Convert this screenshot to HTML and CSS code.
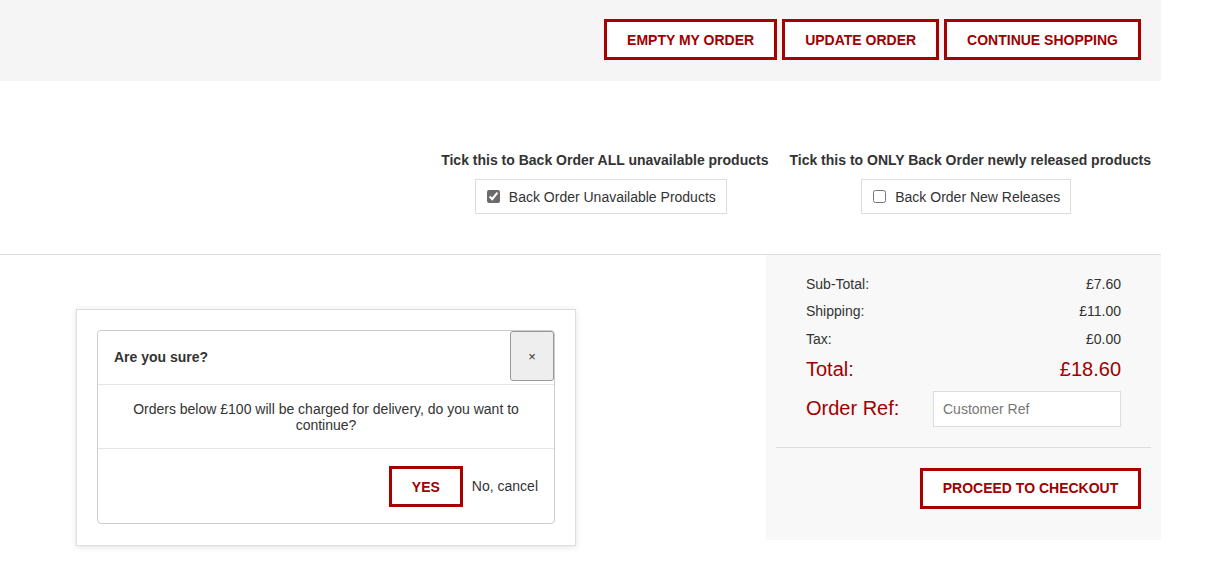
FILE: index.html
```html
<!DOCTYPE html>
<html lang="en">
<head>
<meta charset="utf-8">
<title>Basket</title>
<link rel="stylesheet" href="styles.css">
</head>
<body>
<div class="page">
  <div class="topbar">
    <button class="btn-red">Empty my order</button>
    <button class="btn-red">Update order</button>
    <button class="btn-red">Continue shopping</button>
  </div>

  <div class="backorder">
    <div class="bo-col">
      <div class="bo-label">Tick this to Back Order ALL unavailable products</div>
      <label class="bo-box"><input type="checkbox" checked> Back Order Unavailable Products</label>
    </div>
    <div class="bo-col">
      <div class="bo-label">Tick this to ONLY Back Order newly released products</div>
      <label class="bo-box"><input type="checkbox"> Back Order New Releases</label>
    </div>
  </div>

  <div class="lower">
    <div class="left">
      <div class="dialog-wrap">
        <div class="dialog">
          <div class="dialog-head">
            <span class="dialog-title">Are you sure?</span>
            <button class="close">&times;</button>
          </div>
          <div class="dialog-body">Orders below £100 will be charged for delivery, do you want to continue?</div>
          <div class="dialog-foot">
            <button class="btn-red btn-yes">Yes</button>
            <span class="cancel">No, cancel</span>
          </div>
        </div>
      </div>
    </div>
    <div class="summary">
      <div class="totals">
        <div class="row"><span>Sub-Total:</span><span>£7.60</span></div>
        <div class="row"><span>Shipping:</span><span>£11.00</span></div>
        <div class="row"><span>Tax:</span><span>£0.00</span></div>
        <div class="row total"><span>Total:</span><span>£18.60</span></div>
        <div class="row ref"><span>Order Ref:</span><input type="text" placeholder="Customer Ref"></div>
      </div>
      <div class="sum-rule"></div>
      <div class="checkout"><button class="btn-red btn-checkout">Proceed to checkout</button></div>
    </div>
  </div>
</div>
</body>
</html>
```

FILE: styles.css
```css
* { box-sizing: border-box; }
body {
  margin: 0;
  font-family: "Liberation Sans", Arial, sans-serif;
  font-size: 14px;
  color: #333;
  background: #fff;
}
.page { width: 1161px; }

.btn-red {
  font-family: "Liberation Sans", Arial, sans-serif;
  font-weight: bold;
  font-size: 14px;
  text-transform: uppercase;
  color: #a00000;
  background: #fff;
  border: 3px solid #a80000;
  height: 41px;
  padding: 0 20px;
  cursor: pointer;
}

.topbar {
  background: #f5f5f5;
  height: 81px;
  display: flex;
  justify-content: flex-end;
  align-items: flex-start;
  gap: 5px;
  padding: 19px 20px 0 0;
}

.backorder {
  display: flex;
  justify-content: flex-end;
  gap: 21px;
  padding: 71px 10px 0 0;
  height: 174px;
  border-bottom: 1px solid #ddd;
}
.bo-col {
  display: flex;
  flex-direction: column;
  align-items: center;
}
.bo-label {
  font-weight: bold;
  font-size: 14px;
  line-height: 16px;
  margin-bottom: 11px;
}
.bo-box {
  display: flex;
  align-items: center;
  height: 35px;
  border: 1px solid #ddd;
  padding: 0 10px;
  margin-right: 8px;
  font-size: 14px;
  color: #333;
}
.bo-box input {
  margin: 0 9px 0 1px;
  width: 13px;
  height: 13px;
  accent-color: #6b6b6b;
}

.lower {
  display: flex;
  align-items: flex-start;
}
.left { flex: 1; padding-bottom: 40px; }
.dialog-wrap {
  margin: 54px 0 0 76px;
  width: 500px;
  height: 237px;
  background: #fff;
  border: 1px solid #ddd;
  box-shadow: 0 1px 6px rgba(0,0,0,0.12);
  padding: 20px;
}
.dialog {
  width: 458px;
  height: 194px;
  border: 1px solid #ccc;
  border-radius: 4px;
  display: flex;
  flex-direction: column;
}
.dialog-head {
  height: 54px;
  display: flex;
  align-items: flex-start;
  justify-content: space-between;
  border-bottom: 1px solid #e5e5e5;
}
.dialog-title {
  font-weight: bold;
  padding: 18px 0 0 16px;
  line-height: 16px;
}
.close {
  width: 44px;
  height: 50px;
  background: #eee;
  border: 1px solid #999;
  border-radius: 3px;
  font-size: 13px;
  color: #333;
  padding: 0;
  font-family: "Liberation Sans", Arial, sans-serif;
}
.dialog-body {
  text-align: center;
  padding: 16px 30px;
  line-height: 16px;
  height: 64px;
  border-bottom: 1px solid #e5e5e5;
}
.dialog-foot {
  flex: 1;
  display: flex;
  justify-content: flex-end;
  align-items: flex-start;
  padding: 17px 16px 0 0;
  gap: 9px;
}
.btn-yes {
  width: 74px;
  padding: 0;
}
.cancel {
  line-height: 41px;
}

.summary {
  width: 395px;
  height: 285px;
  background: #f8f8f8;
  display: flex;
  flex-direction: column;
  padding: 0 10px;
}
.totals {
  padding: 15px 30px 0 30px;
}
.row {
  display: flex;
  justify-content: space-between;
  align-items: center;
  height: 27.5px;
  font-size: 14px;
}
.row.total {
  font-size: 20px;
  color: #a00000;
  height: 33px;
}
.row.ref {
  font-size: 20px;
  color: #a00000;
  height: 36px;
  margin-top: 5px;
}
.row.ref input {
  width: 188px;
  height: 36px;
  border: 1px solid #ddd;
  background: #fff;
  padding: 0 9px;
  font-size: 14px;
  font-family: "Liberation Sans", Arial, sans-serif;
}
.row.ref input::placeholder { color: #777; }
.sum-rule {
  border-top: 1px solid #ddd;
  margin-top: 20px;
}
.checkout {
  display: flex;
  justify-content: flex-end;
  padding: 20px 10px 0 0;
}
.btn-checkout { width: 221px; padding: 0; }
```
